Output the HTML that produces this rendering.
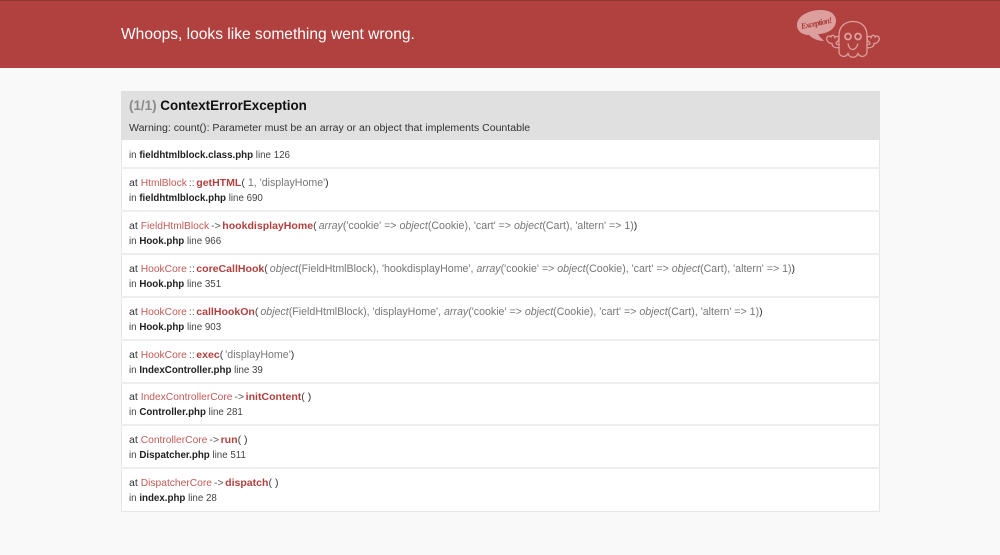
<!DOCTYPE html>
<html><head><meta charset="utf-8"><style>
html,body{margin:0;padding:0}
body{width:1000px;height:555px;overflow:hidden;background:#f9f9f9;position:relative;font-family:"Liberation Sans",sans-serif;color:#222}
#hd{position:absolute;left:0;top:0;width:1000px;height:68px;background:#b0413e;border-top:1px solid #8f3532;box-sizing:border-box}
#hd h1{position:absolute;left:121px;top:24px;margin:0;font-size:15.55px;line-height:20px;font-weight:normal;color:#fff;white-space:nowrap;filter:blur(.25px)}
#head{position:absolute;left:121px;top:91px;width:759px;height:49px;background:#e0e0e0}
.t{position:absolute;left:129px;white-space:nowrap;font-size:10.56px;line-height:14px;color:#333;filter:blur(.3px)}
.n{font-size:9.75px;color:#444}
.title{font-size:13.4px;font-weight:bold;line-height:18px;color:#111}
.title span{color:#8a8a8a}
#list{position:absolute;left:121px;top:140px;width:759px;height:372px;background:#fff;border:1px solid #e6e6e6;border-top:0;box-sizing:border-box}
.l{position:absolute;left:121px;width:759px;height:2px;background:#eee}
.c{color:#c25a57;font-size:10.25px}
.s{color:#555;margin:0 1.5px 0 2px}
.m{color:#b0413e;font-weight:bold}
.p{color:#444}
.a{color:#777;margin-left:2px;font-size:10.64px}
i{color:#777}
b{color:#222}
</style></head><body>
<div id="hd"><h1>Whoops, looks like something went wrong.</h1></div>
<svg style="position:absolute;left:795px;top:5px;filter:blur(.3px)" width="90" height="58" viewBox="0 0 90 58" fill="none">
<path d="M2 20C2 11 14 5 25 5C35 5 41 9 41 16C41 24 32 29 23 29C24 31 26 33 29 36C22 36 17 33 14 30C7 30 2 26 2 20Z" fill="#dc9f9d"/>
<text x="21.500" y="21" font-family="Liberation Serif,serif" font-style="italic" font-weight="bold" font-size="8.5" fill="#a93c39" text-anchor="middle" textLength="32" transform="rotate(-12 21 18)">Exception!</text>
<g stroke="#dc9f9d" stroke-width="1.3" transform="translate(0 .5)">
<path d="M44 46V30C44 21 50 16 58 16C66 16 72 21 72 30V46C72 51 66 53 63 48C61 53 55 53 53 48C50 53 44 51 44 46Z"/>
<circle cx="53" cy="31" r="3" stroke-width="1.800"/>
<circle cx="63" cy="31" r="3" stroke-width="1.800"/>
<path d="M53 38C54 46 61 46 63 38"/>
<path d="M44 42C40 43 37 41 37 38C33 38 31 34 32 32C33 30 35 30 36 32C36 29 39 29 40 32C41 30 44 31 44 33C44 36 41 36 41 38C41 39 43 39 44 39"/>
<path d="M72 42C76 43 79 41 79 38C83 38 85 34 84 32C83 30 81 30 80 32C80 29 77 29 76 32C75 30 72 31 72 33C72 36 75 36 75 38C75 39 73 39 72 39"/>
</g>
</svg>
<div id="head"></div>
<div class="t title" style="top:97px"><span>(1/1)</span> ContextErrorException</div>
<div class="t" style="top:121px">Warning: count(): Parameter must be an array or an object that implements Countable</div>
<div id="list"></div>
<div class="l" style="top:167px"></div><div class="l" style="top:210px"></div><div class="l" style="top:253px"></div><div class="l" style="top:296px"></div><div class="l" style="top:339px"></div><div class="l" style="top:382px"></div><div class="l" style="top:424px"></div><div class="l" style="top:467px"></div>

<div class="t n" style="top:149px">in <b>fieldhtmlblock.class.php</b> line 126</div>

<div class="t" style="top:176px">at <span class="c">HtmlBlock</span><span class="s">::</span><span class="m">getHTML</span><span class="p">(</span><span class="a" style="margin-left:3px">1, 'displayHome'</span>)</div>
<div class="t n" style="top:192px">in <b>fieldhtmlblock.php</b> line 690</div>

<div class="t" style="top:219px">at <span class="c">FieldHtmlBlock</span><span class="s">-&gt;</span><span class="m">hookdisplayHome</span><span class="p">(</span><span class="a"><i>array</i>('cookie' =&gt; <i>object</i>(Cookie), 'cart' =&gt; <i>object</i>(Cart), 'altern' =&gt; 1)</span>)</div>
<div class="t n" style="top:235px">in <b>Hook.php</b> line 966</div>

<div class="t" style="top:262px">at <span class="c">HookCore</span><span class="s">::</span><span class="m">coreCallHook</span><span class="p">(</span><span class="a"><i>object</i>(FieldHtmlBlock), 'hookdisplayHome', <i>array</i>('cookie' =&gt; <i>object</i>(Cookie), 'cart' =&gt; <i>object</i>(Cart), 'altern' =&gt; 1)</span>)</div>
<div class="t n" style="top:278px">in <b>Hook.php</b> line 351</div>

<div class="t" style="top:305px">at <span class="c">HookCore</span><span class="s">::</span><span class="m">callHookOn</span><span class="p">(</span><span class="a"><i>object</i>(FieldHtmlBlock), 'displayHome', <i>array</i>('cookie' =&gt; <i>object</i>(Cookie), 'cart' =&gt; <i>object</i>(Cart), 'altern' =&gt; 1)</span>)</div>
<div class="t n" style="top:321px">in <b>Hook.php</b> line 903</div>

<div class="t" style="top:348px">at <span class="c">HookCore</span><span class="s">::</span><span class="m">exec</span><span class="p">(</span><span class="a">'displayHome'</span>)</div>
<div class="t n" style="top:364px">in <b>IndexController.php</b> line 39</div>

<div class="t" style="top:390px">at <span class="c">IndexControllerCore</span><span class="s">-&gt;</span><span class="m">initContent</span><span class="p">(</span> )</div>
<div class="t n" style="top:406px">in <b>Controller.php</b> line 281</div>

<div class="t" style="top:433px">at <span class="c">ControllerCore</span><span class="s">-&gt;</span><span class="m">run</span><span class="p">(</span> )</div>
<div class="t n" style="top:449px">in <b>Dispatcher.php</b> line 511</div>

<div class="t" style="top:476px">at <span class="c">DispatcherCore</span><span class="s">-&gt;</span><span class="m">dispatch</span><span class="p">(</span> )</div>
<div class="t n" style="top:492px">in <b>index.php</b> line 28</div>
</body></html>
